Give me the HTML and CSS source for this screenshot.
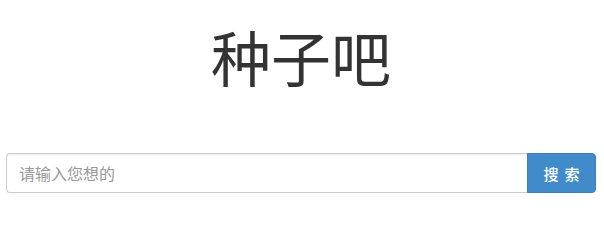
FILE: index.html
```html
<!DOCTYPE html>
<html lang="zh-CN">
<head>
<meta charset="utf-8">
<title>种子吧</title>
<link rel="stylesheet" href="styles.css">
</head>
<body>
<div class="page">
  <h1 class="brand">种子吧</h1>
  <form class="search">
    <input class="search-input" type="text" placeholder="请输入您想的">
    <button class="search-btn" type="button">搜索</button>
  </form>
</div>
</body>
</html>
```
FILE: styles.css
```css
html, body {
  margin: 0;
  padding: 0;
  background: #fff;
}
.page {
  padding: 26px 8px 0 6px;
  font-family: "Noto Sans CJK SC", "Liberation Sans", sans-serif;
}
.brand {
  margin: 0;
  text-align: center;
  font-size: 60px;
  line-height: 60px;
  font-weight: 400;
  color: #333;
}
.search {
  display: flex;
  margin-top: 67px;
  height: 40px;
}
.search-input {
  flex: 1;
  min-width: 0;
  box-sizing: border-box;
  height: 40px;
  margin: 0;
  padding: 0 12px;
  border: 1px solid #ccc;
  border-right: none;
  border-radius: 4px 0 0 4px;
  font-family: inherit;
  font-size: 16px;
  color: #555;
  outline: none;
  box-shadow: inset 0 1px 1px rgba(0,0,0,.075);
}
.search-input::placeholder {
  color: #999;
}
.search-btn {
  width: 69px;
  box-sizing: border-box;
  height: 40px;
  margin: 0;
  padding: 0 0 0 6px;
  border: 1px solid #3a7fbd;
  border-radius: 0 4px 4px 0;
  background: #428bca;
  color: #fff;
  font-family: inherit;
  font-size: 15px;
  font-weight: 500;
  letter-spacing: 6px;
  cursor: pointer;
}
```
